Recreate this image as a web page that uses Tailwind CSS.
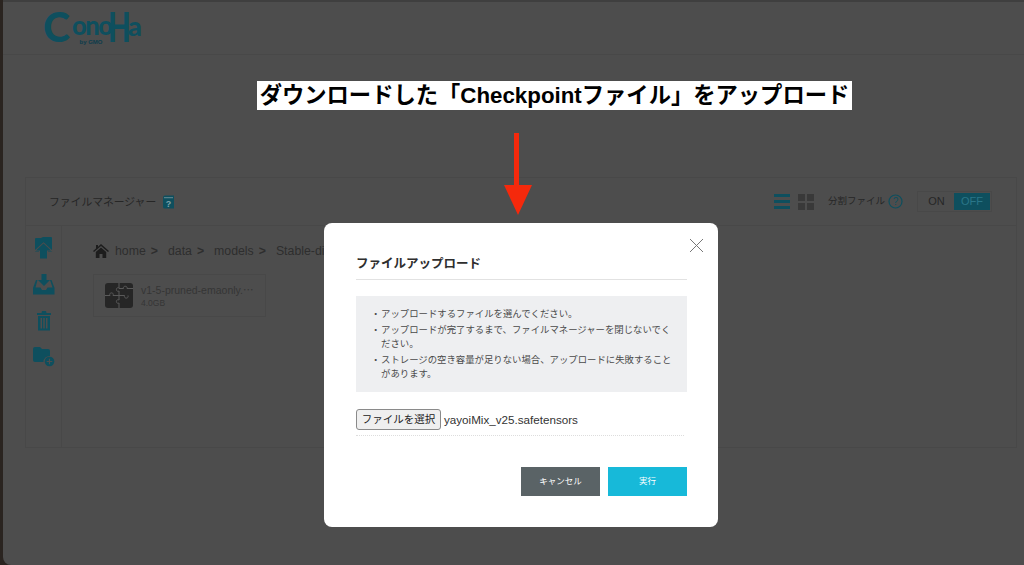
<!DOCTYPE html>
<html lang="ja">
<head>
    <meta charset="UTF-8">
    <title>ファイルアップロード</title>
    <script src="https://cdn.jsdelivr.net/npm/@tailwindcss/browser@4"></script>
</head>
<body class="relative w-[1024px] h-[565px] overflow-hidden bg-[#2a2420] font-['Liberation_Sans','Noto_Sans_CJK_JP',sans-serif]">

    <!-- window behind the overlay -->
    <div class="ml-[3px] h-[565px] rounded-bl-[8px] bg-[#4d4d4d] border-t-2 border-[#3f3f3f] text-[#262626]">

        <header class="h-[53px] border-b border-[#484848] pl-[40px] pt-[7px]">
            <div class="flex items-start h-[36px] text-[#0e4f5e] font-black font-['Lato',sans-serif] whitespace-nowrap">
                <span class="text-[41px] leading-[36px] w-[29px]">C</span>
                <div class="w-[36px] pt-[2.500px] flex flex-col">
                    <span class="block w-[36px] origin-left scale-x-[0.98] text-[26px] leading-[27px] tracking-[-1.500px]">ono</span>
                    <span class="text-[6px] leading-[6px] font-['Liberation_Sans',sans-serif] text-center text-[#0c3c4c] ml-[2px]">by GMO</span>
                </div>
                <span class="block w-[20px]"><span class="block w-[20px] origin-left scale-x-[0.72] text-[41px] leading-[36px]">H</span></span>
                <span class="text-[27px] leading-[27px] mt-[2.500px]">a</span>
            </div>
        </header>

        <section class="ml-[22px] mt-[122px] w-[992px] h-[271px] border border-[#484848] flex flex-col">
            <div class="h-[48px] shrink-0 border-b border-[#484848] flex items-center pl-[23px] pr-[24px]">
                <span class="text-[10.800px] pt-[2px]">ファイルマネージャー</span>
                <svg class="ml-[6px]" width="13" height="14" viewBox="0 0 13 14"><path d="M1 2.500Q1 .5 3 .5H12V13.500H3Q1 13.500 1 12Z" fill="#0e4f5e"/><rect x="2" y="2.200" width="9" height="1" fill="#6a8c95"/><text x="6.500" y="12" font-size="9" font-weight="700" text-anchor="middle" fill="#7fa3ac">?</text></svg>
                <div class="ml-auto flex items-center">
                    <div class="w-[16px] flex flex-col gap-[3px]">
                        <div class="h-[3px] bg-[#0e4f5e]"></div>
                        <div class="h-[3px] bg-[#0e4f5e]"></div>
                        <div class="h-[3px] bg-[#0e4f5e]"></div>
                    </div>
                    <div class="ml-[8px] w-[16px] grid grid-cols-2 gap-[2px]">
                        <div class="h-[7px] bg-[#393939]"></div>
                        <div class="h-[7px] bg-[#393939]"></div>
                        <div class="h-[7px] bg-[#393939]"></div>
                        <div class="h-[7px] bg-[#393939]"></div>
                    </div>
                    <span class="ml-[14px] text-[9.500px]">分割ファイル</span>
                    <svg class="ml-[3px]" width="15" height="15" viewBox="0 0 15 15"><circle cx="7.500" cy="7.500" r="6.500" fill="none" stroke="#0e4f5e" stroke-width="1.200"/><text x="7.500" y="11" font-size="10" text-anchor="middle" fill="#0e4f5e">?</text></svg>
                    <div class="ml-[14px] w-[75px] h-[21px] border border-[#484848] flex items-center text-[11px] p-px">
                        <span class="w-[35px] text-center">ON</span>
                        <span class="flex-1 h-full bg-[#0e4f5e] text-[#2a7688] flex items-center justify-center">OFF</span>
                    </div>
                </div>
            </div>

            <div class="flex flex-1">
                <aside class="w-[36px] shrink-0 border-r border-[#484848] flex flex-col items-center pt-[11px]">
                    <svg width="18" height="22" viewBox="0 0 18 22"><path d="M0 2Q0 1 1 1H6L8 0H16Q17 0 17 1V14Q17 15 16 15H1Q0 15 0 14Z" fill="#0e4f5e"/><path d="M8.500 6.500 16 13.500H12V21.500H5V13.500H1Z" fill="#0e4f5e" stroke="#4d4d4d" stroke-width="2" paint-order="stroke"/></svg>
                    <svg class="mt-[15px]" width="22" height="21" viewBox="0 0 22 21" fill="#0e4f5e"><path d="M8.500 0H13.500V6H17L11 12 5 6H8.500Z"/><path d="M4.500 6H3L0 14V20.500H21.500V14L18.500 6H17L19.500 13.500H14.500L13 16H9L7.500 13.500H2.500Z"/></svg>
                    <svg class="mt-[15px]" width="16" height="21" viewBox="0 0 16 21"><path d="M1 3H5.500L6 1H10L10.500 3H15V5H1Z" fill="#0e4f5e"/><path d="M2 6H14V20.500H2ZM4.500 8V18.500H6V8ZM7.250 8V18.500H8.750V8ZM10 8V18.500H11.500V8Z" fill="#0e4f5e" fill-rule="evenodd"/></svg>
                    <svg class="mt-[15px]" width="22" height="21" viewBox="0 0 22 21"><path d="M0 3Q0 1 2 1H7L9 3H15Q17 3 17 5V10A6 6 0 0 0 10.500 16H2Q0 16 0 14Z" fill="#0e4f5e"/><circle cx="16.500" cy="15.500" r="4.800" fill="#0e4f5e"/><path d="M16.500 12.700V18.300M13.700 15.500H19.300" stroke="#4d4d4d" stroke-width="1.200"/></svg>
                </aside>

                <div class="flex-1 pl-[31px] pt-[17px]">
                    <nav class="flex items-center h-[16px] text-[12.300px] text-[#2e2e2e] whitespace-nowrap">
                        <svg width="16" height="14" viewBox="0 0 16 14" fill="#1d1d1d"><path d="M8 0 16 7 15 8 8 2 1 8 0 7 3 4.400V1H5V2.700Z"/><path d="M2.800 8 8 3.400 13.200 8V14H9.500V10H6.500V14H2.800Z"/></svg>
                        <span class="ml-[6px]">home</span><span class="ml-[5px] font-bold">&gt;</span>
                        <span class="ml-[10px]">data</span><span class="ml-[5px] font-bold">&gt;</span>
                        <span class="ml-[10px]">models</span><span class="ml-[5px] font-bold">&gt;</span>
                        <span class="ml-[10px]">Stable-diffusion</span>
                    </nav>
                    <div class="mt-[15px] w-[173px] h-[43px] border border-[#484848] flex items-center pl-[11px]">
                        <svg width="28" height="25" viewBox="0 0 28 25"><rect width="28" height="25" rx="3" fill="#262626"/><path d="M0 12.500H5C3.500 9 9.500 9 8 12.500H14V8C10.500 9.500 10.500 3.500 14 5V0M14 5.500H18.500C17.500 2.500 23 2.500 22 5.500H28M14 12.500V17C10.500 15.500 10.500 21.500 14 20V25M14 12.500H19.500C18.500 16 24 16 23 12.500" fill="none" stroke="#5a5a5a" stroke-width="1"/></svg>
                        <div class="ml-[8px] text-[#353535]">
                            <div class="text-[10.500px] leading-[14px]">v1-5-pruned-emaonly.⋯</div>
                            <div class="text-[8.500px] leading-[12px]">4.0GB</div>
                        </div>
                    </div>
                </div>
            </div>
        </section>
    </div>

    <!-- annotation over the screenshot -->
    <div class="absolute left-[257px] top-[81px] w-[595px] h-[29px] bg-white flex items-center justify-center text-[22.300px] font-bold text-black whitespace-nowrap">ダウンロードした「Checkpointファイル」をアップロード</div>
    <svg class="absolute left-[500px] top-[130px]" width="36" height="88" viewBox="0 0 36 88">
        <rect x="14" y="3" width="5" height="55" fill="#f5290c"/>
        <path d="M4 55H32L18 85Z" fill="#f5290c"/>
    </svg>

    <!-- upload modal -->
    <div class="absolute left-[324px] top-[223px] w-[394px] h-[304px] bg-white rounded-[8px] pl-[32px] pr-[31px] text-[#333]">
        <button class="absolute right-[14px] top-[15px]" aria-label="閉じる">
            <svg class="block" width="15" height="15" viewBox="0 0 15 15"><path d="M1 1 14 14M14 1 1 14" stroke="#777" stroke-width="1"/></svg>
        </button>
        <h2 class="h-[57px] pt-[31px] border-b border-[#e2e2e2] text-[12.500px] leading-[20px] font-bold text-[#2e2e2e]">ファイルアップロード</h2>
        <ul class="mt-[16px] h-[96px] bg-[#eeeff1] pl-[15px] pr-[10px] pt-[11px] text-[9.400px] leading-[14px] text-[#4a4a4a] flex flex-col gap-[2px]">
            <li class="flex"><span class="w-[10px] shrink-0">・</span><span>アップロードするファイルを選んでください。</span></li>
            <li class="flex"><span class="w-[10px] shrink-0">・</span><span>アップロードが完了するまで、ファイルマネージャーを閉じないでください。</span></li>
            <li class="flex"><span class="w-[10px] shrink-0">・</span><span>ストレージの空き容量が足りない場合、アップロードに失敗することがあります。</span></li>
        </ul>
        <div class="mt-[17px] h-[27px] w-[328px] border-b border-dotted border-[#dddddd] flex items-start">
            <button class="h-[21px] w-[85px] bg-[#efefef] border border-[#8a8a8a] rounded-[3px] text-[10.500px] leading-none text-[#222] whitespace-nowrap">ファイルを選択</button>
            <span class="ml-[3px] text-[11.650px] leading-[22px] text-[#333]">yayoiMix_v25.safetensors</span>
        </div>
        <div class="mt-[31px] flex justify-end gap-[8px] text-[8.500px] text-white">
            <button class="w-[79px] h-[29px] bg-[#5a6366]">キャンセル</button>
            <button class="w-[79px] h-[29px] bg-[#17b9d9]">実行</button>
        </div>
    </div>
</body>
</html>
